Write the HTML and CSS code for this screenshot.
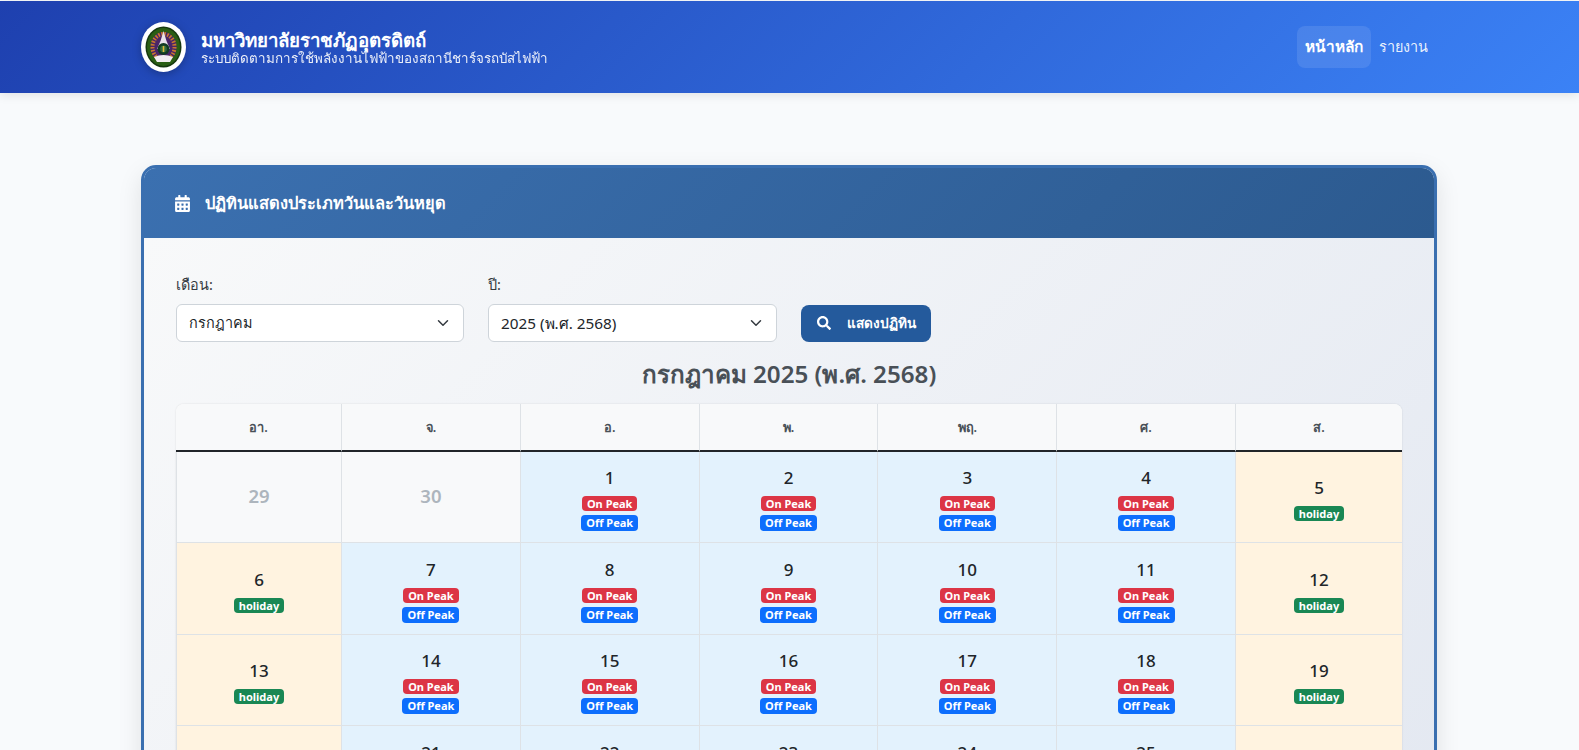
FILE: index.html
```html
<!DOCTYPE html>
<html lang="th">
<head>
  <title>ปฏิทินแสดงประเภทวันและวันหยุด</title>
  <meta charset="UTF-8">
  <meta name="viewport" content="width=device-width, initial-scale=1.0">
  <link rel="stylesheet" href="styles.css">
</head>
<body>
  <header class="topbar">
    <div class="topbar-inner">
      <a class="brand" href="#">
        <svg class="brand-logo" viewBox="0 0 45 50">
          <ellipse cx="22.5" cy="25" rx="22.5" ry="25" fill="#fff"/>
          <ellipse cx="22.5" cy="25" rx="18" ry="20.5" fill="#16380f"/>
          <ellipse cx="22.5" cy="25" rx="16.5" ry="19" fill="#2a5e14"/>
          <ellipse cx="22.5" cy="25" rx="13" ry="15" fill="#4a2468"/>
          <ellipse cx="22.5" cy="25" rx="11" ry="13" fill="none" stroke="#c9772e" stroke-width="4" stroke-dasharray="1.6 1.4"/>
          <path d="M22.5 9 L25.5 19 L29 27 H16 L19.5 19 Z" fill="#e8e2ea"/>
          <path d="M13 35 Q22.5 31 32 35 L29 40 H16 Z" fill="#f2ecf0"/>
          <circle cx="22.5" cy="27" r="6" fill="#123a22"/>
          <circle cx="22.5" cy="27" r="3.4" fill="#2f6a3a"/>
          <rect x="21.7" y="24" width="1.6" height="6" fill="#e0b83a"/>
        </svg>
        <span class="brand-text">
          <span class="brand-title">มหาวิทยาลัยราชภัฏอุตรดิตถ์</span>
          <span class="brand-sub">ระบบติดตามการใช้พลังงานไฟฟ้าของสถานีชาร์จรถบัสไฟฟ้า</span>
        </span>
      </a>
      <nav class="nav">
        <a class="nav-link active" href="#">หน้าหลัก</a>
        <a class="nav-link" href="#">รายงาน</a>
      </nav>
    </div>
  </header>

  <main class="container">
    <section class="card">
      <div class="card-header">
        <svg class="card-icon" viewBox="0 0 448 512"><path fill="currentColor" d="M0 464c0 26.5 21.5 48 48 48h352c26.5 0 48-21.5 48-48V192H0v272zm320-196c0-6.6 5.4-12 12-12h40c6.6 0 12 5.4 12 12v40c0 6.6-5.4 12-12 12h-40c-6.6 0-12-5.4-12-12v-40zm0 128c0-6.6 5.4-12 12-12h40c6.6 0 12 5.4 12 12v40c0 6.6-5.4 12-12 12h-40c-6.6 0-12-5.4-12-12v-40zM192 268c0-6.6 5.4-12 12-12h40c6.6 0 12 5.4 12 12v40c0 6.6-5.4 12-12 12h-40c-6.6 0-12-5.4-12-12v-40zm0 128c0-6.6 5.4-12 12-12h40c6.6 0 12 5.4 12 12v40c0 6.6-5.4 12-12 12h-40c-6.6 0-12-5.4-12-12v-40zM64 268c0-6.6 5.4-12 12-12h40c6.6 0 12 5.4 12 12v40c0 6.6-5.4 12-12 12H76c-6.6 0-12-5.4-12-12v-40zm0 128c0-6.6 5.4-12 12-12h40c6.6 0 12 5.4 12 12v40c0 6.6-5.4 12-12 12H76c-6.6 0-12-5.4-12-12v-40zM400 64h-48V16c0-8.8-7.2-16-16-16h-32c-8.8 0-16 7.2-16 16v48H160V16c0-8.8-7.2-16-16-16h-32c-8.8 0-16 7.2-16 16v48H48C21.5 64 0 85.5 0 112v48h448v-48c0-26.5-21.5-48-48-48z"/></svg>
        <h1 class="card-title">ปฏิทินแสดงประเภทวันและวันหยุด</h1>
      </div>
      <div class="card-body">
        <form class="filters">
          <div class="field">
            <label class="field-label" for="month">เดือน:</label>
            <div class="select-wrap">
              <select id="month" class="select"><option>กรกฎาคม</option></select>
              <svg class="chevron" viewBox="0 0 16 16"><path d="M2 5l6 6 6-6" fill="none" stroke="#343a40" stroke-width="2" stroke-linecap="round" stroke-linejoin="round"/></svg>
            </div>
          </div>
          <div class="field field-year">
            <label class="field-label" for="year">ปี:</label>
            <div class="select-wrap">
              <select id="year" class="select select-year"><option>2025 (พ.ศ. 2568)</option></select>
              <svg class="chevron" viewBox="0 0 16 16"><path d="M2 5l6 6 6-6" fill="none" stroke="#343a40" stroke-width="2" stroke-linecap="round" stroke-linejoin="round"/></svg>
            </div>
          </div>
          <button class="btn" type="button">
            <svg class="btn-icon" viewBox="0 0 512 512"><path fill="currentColor" d="M505 442.7L405.3 343c-4.5-4.5-10.6-7-17-7H372c27.6-35.3 44-79.7 44-128C416 93.1 322.9 0 208 0S0 93.1 0 208s93.1 208 208 208c48.3 0 92.7-16.4 128-44v16.3c0 6.4 2.5 12.5 7 17l99.7 99.7c9.4 9.4 24.6 9.4 33.9 0l28.3-28.3c9.4-9.4 9.4-24.6.1-34zM208 336c-70.7 0-128-57.2-128-128 0-70.7 57.2-128 128-128 70.7 0 128 57.2 128 128 0 70.7-57.2 128-128 128z"/></svg>
            แสดงปฏิทิน
          </button>
        </form>

        <h2 class="month-title">กรกฎาคม 2025 (พ.ศ. 2568)</h2>

        <table class="calendar">
          <colgroup>
            <col class="col-edge"><col class="col-mid"><col class="col-mid"><col class="col-mid"><col class="col-mid"><col class="col-mid"><col class="col-edge">
          </colgroup>
          <thead>
            <tr><th>อา.</th><th>จ.</th><th>อ.</th><th>พ.</th><th>พฤ.</th><th>ศ.</th><th>ส.</th></tr>
          </thead>
          <tbody>
            <tr>
              <td class="other"><div class="num">29</div></td>
              <td class="other"><div class="num">30</div></td>
              <td class="work"><div class="num">1</div><span class="badge on">On Peak</span><span class="badge off">Off Peak</span></td>
              <td class="work"><div class="num">2</div><span class="badge on">On Peak</span><span class="badge off">Off Peak</span></td>
              <td class="work"><div class="num">3</div><span class="badge on">On Peak</span><span class="badge off">Off Peak</span></td>
              <td class="work"><div class="num">4</div><span class="badge on">On Peak</span><span class="badge off">Off Peak</span></td>
              <td class="rest"><div class="num">5</div><span class="badge hol">holiday</span></td>
            </tr>
            <tr>
              <td class="rest"><div class="num">6</div><span class="badge hol">holiday</span></td>
              <td class="work"><div class="num">7</div><span class="badge on">On Peak</span><span class="badge off">Off Peak</span></td>
              <td class="work"><div class="num">8</div><span class="badge on">On Peak</span><span class="badge off">Off Peak</span></td>
              <td class="work"><div class="num">9</div><span class="badge on">On Peak</span><span class="badge off">Off Peak</span></td>
              <td class="work"><div class="num">10</div><span class="badge on">On Peak</span><span class="badge off">Off Peak</span></td>
              <td class="work"><div class="num">11</div><span class="badge on">On Peak</span><span class="badge off">Off Peak</span></td>
              <td class="rest"><div class="num">12</div><span class="badge hol">holiday</span></td>
            </tr>
            <tr>
              <td class="rest"><div class="num">13</div><span class="badge hol">holiday</span></td>
              <td class="work"><div class="num">14</div><span class="badge on">On Peak</span><span class="badge off">Off Peak</span></td>
              <td class="work"><div class="num">15</div><span class="badge on">On Peak</span><span class="badge off">Off Peak</span></td>
              <td class="work"><div class="num">16</div><span class="badge on">On Peak</span><span class="badge off">Off Peak</span></td>
              <td class="work"><div class="num">17</div><span class="badge on">On Peak</span><span class="badge off">Off Peak</span></td>
              <td class="work"><div class="num">18</div><span class="badge on">On Peak</span><span class="badge off">Off Peak</span></td>
              <td class="rest"><div class="num">19</div><span class="badge hol">holiday</span></td>
            </tr>
            <tr>
              <td class="rest"><div class="num">20</div><span class="badge hol">holiday</span></td>
              <td class="work"><div class="num">21</div><span class="badge on">On Peak</span><span class="badge off">Off Peak</span></td>
              <td class="work"><div class="num">22</div><span class="badge on">On Peak</span><span class="badge off">Off Peak</span></td>
              <td class="work"><div class="num">23</div><span class="badge on">On Peak</span><span class="badge off">Off Peak</span></td>
              <td class="work"><div class="num">24</div><span class="badge on">On Peak</span><span class="badge off">Off Peak</span></td>
              <td class="work"><div class="num">25</div><span class="badge on">On Peak</span><span class="badge off">Off Peak</span></td>
              <td class="rest"><div class="num">26</div><span class="badge hol">holiday</span></td>
            </tr>
          </tbody>
        </table>
      </div>
    </section>
  </main>
</body>
</html>
```

FILE: styles.css
```css
html, body {
  height: 100%;
}

body {
  margin: 0;
  padding: 1px 1px 0 0;
  box-sizing: border-box;
  overflow: hidden;
  font-family: "Noto Sans", "Open Sans", sans-serif;
  font-size: 16px;
  line-height: 1.5;
  color: #212529;
  background-color: #f8fafc;
}

.topbar {
  height: 92px;
  margin-right: -1px;
  background: linear-gradient(135deg, #1e40af, #3b82f6);
  box-shadow: 0 2px 10px rgba(0, 0, 0, 0.1);
}

.topbar-inner {
  height: 100%;
  width: 1295px;
  margin: 0 auto;
  padding-right: 3px;
  display: flex;
  align-items: center;
  justify-content: space-between;
}

.brand {
  display: flex;
  align-items: center;
  gap: 15px;
  color: #fff;
  text-decoration: none;
}

.brand-logo {
  width: 45px;
  height: 50px;
  filter: drop-shadow(0 2px 4px rgba(0, 0, 0, 0.25));
}

.brand-text {
  display: flex;
  flex-direction: column;
  padding-top: 2px;
}

.brand-title {
  font-size: 18.7px;
  font-weight: 700;
  line-height: 1.1;
}

.brand-sub {
  font-size: 13.4px;
  line-height: 1.2;
  opacity: 0.9;
}

.nav {
  display: flex;
  align-items: center;
}

.nav-link {
  padding: 9px 8px;
  border-radius: 8px;
  color: rgba(255, 255, 255, 0.9);
  font-size: 14.4px;
  text-decoration: none;
}

.nav-link.active {
  background-color: rgba(255, 255, 255, 0.1);
  color: #fff;
  font-size: 15.4px;
  font-weight: 700;
}

.container {
  width: 1296px;
  margin: 72px auto 0;
}

.card {
  border: 3px solid #3a6fb0;
  border-radius: 15px;
  overflow: hidden;
  box-shadow: 0 8px 25px rgba(0, 0, 0, 0.1);
}

.card-header {
  height: 70px;
  padding: 0 31px;
  display: flex;
  align-items: center;
  gap: 15px;
  color: #fff;
  background: linear-gradient(135deg, #3b70b0, #2c5a8f);
}

.card-icon {
  width: 15px;
  height: 17px;
}

.card-title {
  margin: 0;
  font-size: 16.4px;
  font-weight: 700;
}

.card-body {
  padding: 36px 32px 32px;
  background: linear-gradient(135deg, #f8f9fa, #e3e8f1);
}

.filters {
  display: flex;
  align-items: flex-end;
  gap: 24px;
  margin-bottom: 17px;
}

.field {
  width: 288px;
}

.field-year {
  width: 289px;
}

.field-label {
  display: block;
  margin-bottom: 8px;
  font-size: 14.4px;
  color: #343a40;
}

.select-wrap {
  position: relative;
}

.select {
  width: 100%;
  height: 38px;
  padding: 0 36px 0 12px;
  appearance: none;
  border: 1px solid #ced4da;
  border-radius: 6px;
  background-color: #fff;
  color: #212529;
  font-family: inherit;
  font-size: 14.4px;
}

.select-year {
  font-size: 15.3px;
}

.chevron {
  position: absolute;
  top: 13px;
  right: 15px;
  width: 12px;
  height: 12px;
  pointer-events: none;
}

.btn {
  height: 37px;
  width: 130px;
  display: flex;
  align-items: center;
  justify-content: center;
  gap: 16px;
  border: none;
  border-radius: 8px;
  background-color: #245a9c;
  color: #fff;
  font-family: inherit;
  font-size: 13.6px;
  font-weight: 600;
}

.btn-icon {
  width: 14px;
  height: 14px;
}

.month-title {
  margin: 0 0 16px;
  text-align: center;
  font-size: 24.2px;
  font-weight: 600;
  line-height: 1.2;
  color: #495057;
}

.calendar {
  width: 100%;
  table-layout: fixed;
  border-collapse: separate;
  border-spacing: 0;
  border-radius: 8px;
  background-color: #fff;
  box-shadow: 0 0 2px rgba(0, 0, 0, 0.12);
}

.col-edge {
  width: 166px;
}

.calendar th {
  height: 44px;
  padding: 2px 0 0;
  border-right: 1px solid #dee2e6;
  border-bottom: 2px solid #212529;
  background-color: #f8f9fa;
  font-size: 12.8px;
  font-weight: 600;
  color: #495057;
}

.calendar th:first-child {
  border-top-left-radius: 8px;
}

.calendar th:last-child {
  border-top-right-radius: 8px;
  border-right: none;
}

.calendar td {
  height: 86.5px;
  padding: 4px 0 0;
  border-right: 1px solid #dee2e6;
  border-bottom: 1px solid #dee2e6;
  text-align: center;
  vertical-align: middle;
}

.calendar td:first-child {
  border-left: 1px solid #dee2e6;
}

.calendar td:last-child {
  border-right: none;
}

.work {
  background-color: #e3f2fd;
}

.rest {
  background-color: #fff3e0;
}

.other {
  background-color: #f8f9fa;
}

.num {
  font-size: 17px;
  font-weight: 500;
  line-height: 24px;
  margin-bottom: 6px;
}

.other .num {
  color: #adb5bd;
  font-size: 18.5px;
  font-weight: 600;
  margin-bottom: 5px;
}

.badge {
  display: block;
  width: fit-content;
  margin: 0 auto;
  padding: 0 5px;
  border-radius: 4px;
  color: #fff;
  font-size: 11px;
  font-weight: 700;
  line-height: 15px;
}

.on {
  background-color: #dc3545;
}

.off {
  margin-top: 4px;
  background-color: #0d6efd;
  line-height: 16px;
}

.hol {
  background-color: #198754;
}
```
